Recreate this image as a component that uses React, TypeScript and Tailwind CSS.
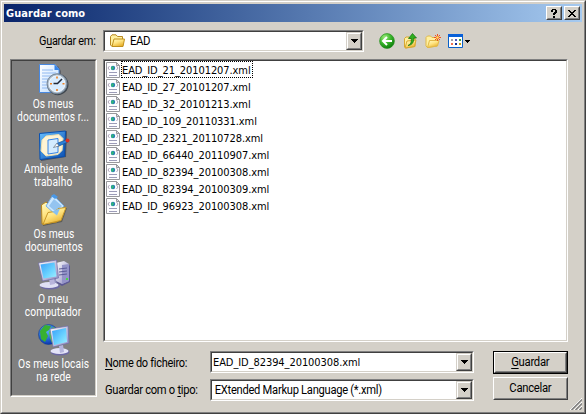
import type { ReactNode } from "react";

const sunken = "border border-t-[#808080] border-l-[#808080] border-b-white border-r-white";
const sunkenInner = "border border-t-[#404040] border-l-[#404040] border-b-[#d4d0c8] border-r-[#d4d0c8]";
const ui = "font-['Roboto','Liberation_Sans',sans-serif] text-[12px]";
const tahoma = "font-['DejaVu_Sans_Condensed','DejaVu_Sans',sans-serif] text-[11px]";

const files = [
  "EAD_ID_21_20101207.xml",
  "EAD_ID_27_20101207.xml",
  "EAD_ID_32_20101213.xml",
  "EAD_ID_109_20110331.xml",
  "EAD_ID_2321_20110728.xml",
  "EAD_ID_66440_20110907.xml",
  "EAD_ID_82394_20100308.xml",
  "EAD_ID_82394_20100309.xml",
  "EAD_ID_96923_20100308.xml",
];

function Gradients() {
  return (
    <svg className="absolute h-0 w-0" aria-hidden="true">
      <defs>
        <linearGradient id="folder" x1="0" y1="0" x2="0.6" y2="1">
          <stop offset="0" stopColor="#fffbc8" />
          <stop offset="0.5" stopColor="#ffe583" />
          <stop offset="1" stopColor="#e8b02c" />
        </linearGradient>
        <linearGradient id="screen" x1="0" y1="0" x2="1" y2="1">
          <stop offset="0" stopColor="#38a0f8" />
          <stop offset="0.55" stopColor="#68d0ff" />
          <stop offset="1" stopColor="#a0f0ff" />
        </linearGradient>
        <linearGradient id="blue" x1="0" y1="0" x2="1" y2="1">
          <stop offset="0" stopColor="#68c0ff" />
          <stop offset="1" stopColor="#084cb0" />
        </linearGradient>
        <linearGradient id="paper" x1="0" y1="0" x2="1" y2="1">
          <stop offset="0" stopColor="#ffffff" />
          <stop offset="1" stopColor="#bcdcff" />
        </linearGradient>
        <linearGradient id="metal" x1="0" y1="0" x2="1" y2="1">
          <stop offset="0" stopColor="#ffffff" />
          <stop offset="1" stopColor="#8c88c0" />
        </linearGradient>
        <radialGradient id="green" cx="0.35" cy="0.25" r="0.8">
          <stop offset="0" stopColor="#9cea7c" />
          <stop offset="0.5" stopColor="#3cb82c" />
          <stop offset="1" stopColor="#087808" />
        </radialGradient>
        <radialGradient id="globe" cx="0.4" cy="0.3" r="0.7">
          <stop offset="0" stopColor="#60b8ff" />
          <stop offset="1" stopColor="#0838b0" />
        </radialGradient>
      </defs>
    </svg>
  );
}

function RecentIcon() {
  return (
    <svg className="h-8 w-8" viewBox="0 0 32 32">
      <path d="M3 2h17l3 5v22H3z" fill="#303848" opacity=".45" />
      <path d="M1.500.5h15.500l4 4.500v23.500H1.500z" fill="url(#paper)" stroke="#4888e0" />
      <path d="M16.500.5v5.500h5z" fill="#3484e8" />
      <path d="M4 6h11M4 9h14M4 12h9M4 15h6M4 18h5M4 21h5M4 24h7" stroke="#90b8f0" />
      <circle cx="19.800" cy="20.500" r="10.700" fill="#404850" />
      <circle cx="19" cy="19.800" r="10" fill="#a8b8c8" stroke="#788898" />
      <circle cx="19" cy="19.800" r="8" fill="#d8ecff" stroke="#f4faff" />
      <path d="M19 12.500v2M19 25v2M12 19.800h2M24.500 19.800h2" stroke="#f08020" strokeWidth="1.600" />
      <path d="m24 15-4.500 4.500h-4" fill="none" stroke="#202838" strokeWidth="1.500" />
    </svg>
  );
}

function DesktopIcon() {
  return (
    <svg className="h-8 w-8" viewBox="0 0 32 32">
      <path d="m3 5 26-3-1 26-25 4z" fill="#203050" opacity=".6" />
      <path d="m1.500 4.500 26-2.500-1 25.500L2 30.500z" fill="url(#blue)" stroke="#0850b0" />
      <path d="m8 7 13-1.500 4 4-1 12-4 4-12 1.500-5-5 1-11z" fill="#fff4d4" stroke="#ece0b0" />
      <path d="m10 11 10-1.500v14l-10 1.500z" fill="#d4ecff" stroke="#3484e8" />
      <path d="m17 17 3-3 9-3.500 1 2.500-9 4z" fill="#2c80d8" stroke="#185090" strokeWidth=".7" />
      <path d="m15.500 18.500 3.500-4.500 2 3z" fill="#fff" stroke="#506070" strokeWidth=".6" />
      <circle cx="29.500" cy="11.500" r="2" fill="#d83020" />
    </svg>
  );
}

function DocumentsIcon() {
  return (
    <svg className="h-8 w-8" viewBox="0 0 32 32">
      <path d="m5 10 5-2 2 5 17 1-5 14-19 4z" fill="#383830" opacity=".5" />
      <path d="M3.500 11 8 8l3 3 12 1-4 16-15 2z" fill="url(#folder)" stroke="#b88820" />
      <path d="m8 12 7-11 11 11-8 9z" fill="#cce8ff" stroke="#78b0e8" />
      <path d="m11 12 5-7 8 7-6 6z" fill="#94c4f0" />
      <path d="m13 2 3-2 4 3-3 2z" fill="#4898e8" />
      <path d="m5 30.500 5-12 7-1 3-3 8-1-5 13z" fill="url(#folder)" stroke="#c89828" />
      <path d="m14 17.500 8-3-3 7z" fill="#88c0f0" />
    </svg>
  );
}

function ComputerIcon() {
  return (
    <svg className="h-8 w-8" viewBox="0 0 32 32">
      <path d="m19 5 9-2 4 4v16l-8 4-7-4z" fill="#5c5894" />
      <path d="m18 4 8-2 5 3v17l-7 3-6-3z" fill="url(#metal)" />
      <path d="m24 6 7-1v17l-7 3z" fill="#9494c8" />
      <path d="m21 10 8-1m-8 4 8-1m-8 4 8-1" stroke="#5c5c98" />
      <path d="M28 19h2v2h-2z" fill="#48d848" />
      <path d="m12 21 6-1 1 6-7 1z" fill="#9494c0" />
      <ellipse cx="12" cy="27" rx="10" ry="3.500" fill="#6c68a4" />
      <ellipse cx="11" cy="26" rx="9.500" ry="3" fill="#e0e0f4" />
      <path d="m11 20 5-1 1 6-5 1z" fill="#b8b4dc" />
      <path d="m.5 4 18-3 2 18-16 3z" fill="url(#metal)" stroke="#706ca8" strokeWidth=".7" />
      <path d="m2.500 5.500 14-2 2 14-13 2z" fill="url(#screen)" />
    </svg>
  );
}

function NetworkIcon() {
  return (
    <svg className="h-8 w-8" viewBox="0 0 32 32">
      <circle cx="10.500" cy="10.500" r="10" fill="url(#globe)" stroke="#103c90" strokeWidth=".6" />
      <path d="M2 7 7 1l6 1-2 4-3 2 2 4-3 6-4-3z" fill="#38b030" />
      <path d="m11 8 4-5 4 2v10l-5 4-2-5z" fill="#58c840" />
      <ellipse cx="22" cy="28" rx="9.500" ry="3.500" fill="#6c68a4" />
      <ellipse cx="21.500" cy="27" rx="9" ry="3" fill="#e4e4f8" />
      <path d="m12 5 18-3 1 17-16 4z" fill="url(#metal)" stroke="#706ca8" strokeWidth=".7" />
      <path d="m14 7 14-3 1 14-13 3z" fill="url(#screen)" />
      <path d="m21 22 4-1 1 7-4 1z" fill="#b4b4dc" />
    </svg>
  );
}

function FolderIcon() {
  return (
    <svg className="h-4 w-4 shrink-0" viewBox="0 0 16 16">
      <path d="M1.500 3.500 3 1.800h4l1.500 1.700h5v9.500H2.500l-1-1z" fill="#fff0a0" stroke="#b88820" />
      <path d="M3 13.500 5 6h10.500L14 13.500z" fill="url(#folder)" stroke="#c0901c" />
    </svg>
  );
}

function XmlIcon() {
  return (
    <svg className="h-4 w-[14px] shrink-0" viewBox="0 0 14 16">
      <path d="M.5.5h10l3 3v12H.5z" fill="#fdfdff" stroke="#98989c" />
      <path d="M10.500.5v3h3z" fill="#dcdce4" stroke="#98989c" />
      <path d="M3.500 4 2 6l1.500 2M10.500 4 12 6l-1.500 2" fill="none" stroke="#9c90a8" strokeWidth=".8" />
      <circle cx="7" cy="6" r="2.200" fill="#2878b8" />
      <path d="m6 4 2 1-1 3-2-1z" fill="#30b878" />
      <path d="M3 10.500h8M3 13.500h8" stroke="#9c9cb8" />
    </svg>
  );
}

function BackIcon() {
  return (
    <svg className="h-4 w-4" viewBox="0 0 16 16">
      <circle cx="8" cy="8" r="7.400" fill="url(#green)" stroke="#289020" strokeWidth=".7" />
      <path d="M13 8H4m4-4L4 8l4 4" fill="none" stroke="#fff" strokeWidth="2" />
    </svg>
  );
}

function UpIcon() {
  return (
    <svg className="h-4 w-4" viewBox="0 0 16 16">
      <path d="M2.500 5.500 4 4h3l1 1.500h5v8l-9 1.500-1.500-1z" fill="#fff0a0" stroke="#d8a830" />
      <path d="m3 15 2-7 9-1-1.500 6.500z" fill="url(#folder)" stroke="#d8a830" />
      <path d="M6 12.500c3-1 3.500-3.500 3.300-7H6.500l4-5 4 4.500h-2.700c0 5-2 7-5.800 7.500z" fill="#30b020" stroke="#107010" strokeWidth=".7" />
    </svg>
  );
}

function NewFolderIcon() {
  return (
    <svg className="h-4 w-4" viewBox="0 0 16 16">
      <path d="M1 4.500 2.500 3h3L7 4.500h5v8.500L2.500 14.500 1 13z" fill="#fff0a0" stroke="#e0b848" />
      <path d="m2.500 14.500 2-7h9.500L12.500 13z" fill="url(#folder)" stroke="#e0b848" />
      <path d="M12.500 1v7M9 4.500h7M10 2l5 5m0-5-5 5" stroke="#f05020" />
      <circle cx="12.500" cy="4.500" r="1.300" fill="#ffe060" />
    </svg>
  );
}

function ViewIcon() {
  return (
    <svg className="h-[14px] w-[15px]" viewBox="0 0 15 14">
      <path d="M.5.5h14v13H.5z" fill="#fff" stroke="#0860c8" />
      <path d="M0 0h15v3H0z" fill="#0860d8" />
      <path d="M3 5h2v2H3z" fill="#a0a0a8" />
      <path d="M7 5h2v2H7z" fill="#5058c0" />
      <path d="M11 5h2v2h-2z" fill="#38a048" />
      <path d="M3 9h2v2H3z" fill="#f07050" />
      <path d="M7 9h2v2H7z" fill="#103090" />
      <path d="M11 9h2v2h-2z" fill="#c8a010" />
    </svg>
  );
}

function Arrow({ className }: { className: string }) {
  return (
    <svg className={className} viewBox="0 0 7 4" shapeRendering="crispEdges">
      <path d="M0 0h7v1H6v1H5v1H4v1H3V3H2V2H1V1H0z" />
    </svg>
  );
}

function Combo({ className, children }: { className: string; children: ReactNode }) {
  return (
    <div className={`${sunken} ${className}`}>
      <div className={`${sunkenInner} flex h-full justify-between bg-white`}>
        {children}
        <div className="w-4 shrink-0 border border-t-[#d4d0c8] border-l-[#d4d0c8] border-b-[#404040] border-r-[#404040]">
          <div className="flex h-full items-center justify-center border border-t-white border-l-white border-b-[#808080] border-r-[#808080] bg-[#d4d0c8]">
            <Arrow className="h-1 w-[7px]" />
          </div>
        </div>
      </div>
    </div>
  );
}

function TitleButton({ children }: { children: ReactNode }) {
  return (
    <div className="h-[14px] w-4 border border-t-white border-l-white border-b-[#404040] border-r-[#404040]">
      <div className="flex h-full items-center justify-center border border-t-[#d4d0c8] border-l-[#d4d0c8] border-b-[#808080] border-r-[#808080] bg-[#d4d0c8]">
        {children}
      </div>
    </div>
  );
}

function Place({ icon, lines }: { icon: ReactNode; lines: string[] }) {
  return (
    <div className="flex h-[65px] flex-col items-center">
      {icon}
      <div className={`${ui} mt-0.5 scale-x-[0.855] text-center leading-[13px] tracking-[0.1px] whitespace-nowrap text-white`}>
        {lines.map((line) => (
          <div key={line}>{line}</div>
        ))}
      </div>
    </div>
  );
}

export default function App() {
  return (
    <div className="h-[414px] w-[586px] border border-t-[#d4d0c8] border-l-[#d4d0c8] border-r-[#404040] border-b-[#404040] bg-[#d4d0c8] text-black">
      <Gradients />
      <div className="relative h-full border border-t-white border-l-white border-r-[#808080] border-b-[#808080] p-0.5">
        <div className="flex h-[18px] items-center justify-between bg-linear-to-r from-[#0a246a] to-[#a6caf0] pr-0.5 pl-0.5">
          <span className="pt-px font-['DejaVu_Sans_Condensed',sans-serif] text-[11px] leading-[17px] font-bold tracking-[0.05px] text-white">Guardar como</span>
          <div className="flex gap-0.5">
            <TitleButton>
              <svg className="h-[9px] w-2" viewBox="0 0 8 9" shapeRendering="crispEdges">
                <path d="M2 0h4v1h1v3H6v1H5v1H3V4h1V3h1V1H3v2H1V1h1zM3 7h2v2H3z" />
              </svg>
            </TitleButton>
            <TitleButton>
              <svg className="h-[7px] w-2" viewBox="0 0 8 7" shapeRendering="crispEdges">
                <path d="M0 0h2v1h1v1h2V1h1V0h2v1H7v1H6v1H5v1h1v1h1v1h1v1H6V6H5V5H3v1H2v1H0V6h1V5h1V4h1V3H2V2H1V1H0z" />
              </svg>
            </TitleButton>
          </div>
        </div>

        <div className="mt-2 flex h-[22px] items-center">
          <div className={`${ui} w-[99px] pl-[35px] tracking-[-0.3px] whitespace-nowrap`}>
            <span className="inline-block origin-left scale-x-[0.91]">
              G<u className="underline-offset-2">u</u>ardar em:
            </span>
          </div>
          <Combo className="h-[22px] w-[261px]">
            <div className="flex items-center gap-1 pl-1">
              <FolderIcon />
              <span className={`${ui} origin-left scale-x-95 pl-px tracking-[-0.4px]`}>EAD</span>
            </div>
          </Combo>
          <div className="flex items-center gap-[7px] pl-[15px]">
            <BackIcon />
            <UpIcon />
            <NewFolderIcon />
            <div className="flex items-center gap-0.5">
              <ViewIcon />
              <Arrow className="h-[3px] w-[5px]" />
            </div>
          </div>
        </div>

        <div className="mt-[7px] flex gap-1.5 pl-1.5">
          <div className={`${sunken} h-[338px] w-[87px] shrink-0`}>
            <div className={`${sunkenInner} h-full bg-[#808080] pt-[3px]`}>
              <Place icon={<RecentIcon />} lines={["Os meus", "documentos r..."]} />
              <Place icon={<DesktopIcon />} lines={["Ambiente de", "trabalho"]} />
              <Place icon={<DocumentsIcon />} lines={["Os meus", "documentos"]} />
              <Place icon={<ComputerIcon />} lines={["O meu", "computador"]} />
              <Place icon={<NetworkIcon />} lines={["Os meus locais", "na rede"]} />
            </div>
          </div>

          <div className="w-[465px]">
            <div className={`${sunken} h-[283px]`}>
              <div className={`${sunkenInner} h-full bg-white`}>
                {files.map((file, i) => (
                  <div key={file} className="flex h-[17px] items-center pl-px">
                    <XmlIcon />
                    <span
                      className={`${tahoma} ml-px h-[17px] border pt-px pr-px leading-[15px] tracking-[-0.08px] whitespace-nowrap ${i === 0 ? "border-dotted border-black" : "border-transparent"}`}
                    >
                      {file}
                    </span>
                  </div>
                ))}
              </div>
            </div>

            <div className="mt-[9px] flex">
              <div className={`${ui} w-[107px] pl-0.5 tracking-[-0.3px] whitespace-nowrap`}>
                <div className="h-7 origin-left scale-x-[0.915] leading-6">
                  <u className="underline-offset-2">N</u>ome do ficheiro:
                </div>
                <div className="origin-left scale-x-[0.93] leading-[22px]">
                  Guardar com o <u className="underline-offset-2">t</u>ipo:
                </div>
              </div>
              <div className="flex w-[264px] flex-col gap-1.5">
                <Combo className="h-[22px]">
                  <span className={`${tahoma} pl-px leading-[19px] tracking-[-0.08px]`}>EAD_ID_82394_20100308.xml</span>
                </Combo>
                <Combo className="h-[22px]">
                  <span className={`${ui} origin-left scale-x-[0.93] pl-[3px] leading-[19px] tracking-[-0.3px] whitespace-nowrap`}>EXtended Markup Language (*.xml)</span>
                </Combo>
              </div>
              <div className={`${ui} ml-[19px] flex w-[75px] flex-col gap-[3px]`}>
                <div className="h-[23px] border border-black">
                  <div className="h-full border border-t-white border-l-white border-r-[#404040] border-b-[#404040]">
                    <div className="h-full border border-t-[#d4d0c8] border-l-[#d4d0c8] border-r-[#808080] border-b-[#808080] text-center leading-[17px] tracking-[-0.3px]">
                      <span className="inline-block scale-x-[0.94]">
                        <u className="underline-offset-2">G</u>uardar
                      </span>
                    </div>
                  </div>
                </div>
                <div className="h-[23px] border border-t-white border-l-white border-r-[#404040] border-b-[#404040]">
                  <div className="h-full border border-t-[#d4d0c8] border-l-[#d4d0c8] border-r-[#808080] border-b-[#808080] text-center leading-[19px] tracking-[-0.3px]">
                    <span className="inline-block scale-x-[0.94]">Cancelar</span>
                  </div>
                </div>
              </div>
            </div>
          </div>
        </div>

        <svg className="absolute right-0.5 bottom-0.5 h-3 w-3" viewBox="0 0 12 12">
          <path d="M0 12 12 0M4 12l8-8M8 12l4-4" stroke="#fff" />
          <path d="M1.500 12 12 1.500M5.500 12 12 5.500M9.500 12 12 9.500" stroke="#808080" strokeWidth="1.500" />
        </svg>
      </div>
    </div>
  );
}
